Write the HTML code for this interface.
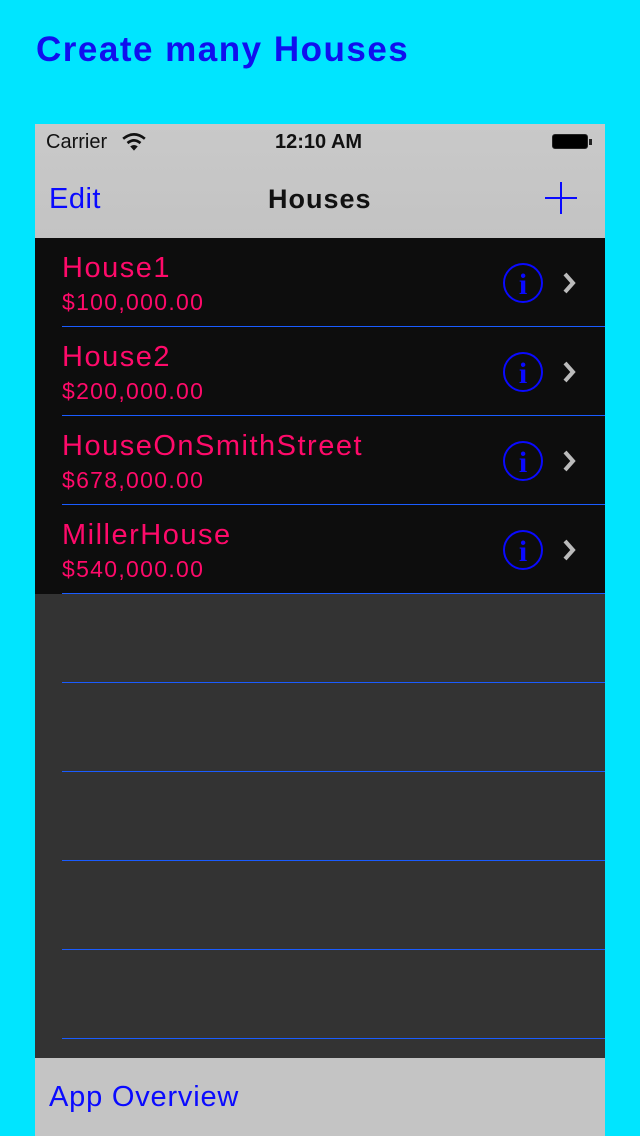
<!DOCTYPE html>
<html><head><style>
body{margin:0;width:640px;height:1136px;background:#00e5ff;position:relative;overflow:hidden;font-family:"Liberation Sans",sans-serif}
.a{position:absolute}
.title{left:36px;top:30px;font-size:35px;font-weight:bold;color:#1010ee;letter-spacing:1.5px}
.sep{position:absolute;left:62px;width:543px;height:1px;background:#1a5cff}
.n{position:absolute;left:62px;font-size:29px;color:#ff0a6a;letter-spacing:1.5px}
.p{position:absolute;left:62px;font-size:23px;color:#ff0a6a;letter-spacing:1.3px}
</style></head><body>
<div class="a title">Create many Houses</div>
<div class="a" style="left:35px;top:124px;width:570px;height:114px;background:linear-gradient(#c9c9c9,#c3c3c3)"></div>
<div class="a" style="left:46px;top:131px;font-size:20px;color:#111">Carrier</div>
<svg class="a" style="left:121px;top:132px" width="26" height="20" viewBox="0 0 24 18"><path d="M2 6 Q12 -2 22 6" stroke="#111" stroke-width="2.5" fill="none"/><path d="M6 10 Q12 5 18 10" stroke="#111" stroke-width="2.5" fill="none"/><path d="M12 17 L8.5 13 Q12 10.5 15.5 13Z" fill="#111"/></svg>
<div class="a" style="left:275px;top:131px;font-size:20px;font-weight:bold;color:#111">12:10 AM</div>
<div class="a" style="left:552px;top:134px;width:36px;height:15px;border:1px solid #222;border-radius:3px;background:#000;box-sizing:border-box"></div>
<div class="a" style="left:589px;top:139px;width:3px;height:6px;background:#222"></div>
<div class="a" style="left:49px;top:183px;font-size:29px;color:#0a0aff;letter-spacing:0.5px">Edit</div>
<div class="a" style="left:268px;top:184px;font-size:27px;font-weight:bold;color:#111;letter-spacing:1px">Houses</div>
<div class="a" style="left:560px;top:182px;width:2px;height:32px;background:#0a0aff"></div>
<div class="a" style="left:545px;top:197px;width:32px;height:2px;background:#0a0aff"></div>
<div class="a" style="left:35px;top:238px;width:570px;height:356px;background:#0d0d0d"></div>
<div class="a" style="left:35px;top:594px;width:570px;height:464px;background:#333"></div>
<div class="n" style="top:252px">House1</div><div class="p" style="top:289px">$100,000.00</div>
<div class="n" style="top:341px">House2</div><div class="p" style="top:378px">$200,000.00</div>
<div class="n" style="top:430px">HouseOnSmithStreet</div><div class="p" style="top:467px">$678,000.00</div>
<div class="n" style="top:519px">MillerHouse</div><div class="p" style="top:556px">$540,000.00</div>
<svg class="a" style="left:480px;top:238px" width="120" height="356">
<g id="r"><circle cx="43" cy="45" r="19" stroke="#0a0aff" stroke-width="2" fill="none"/><text x="43" y="56" text-anchor="middle" font-family="Liberation Serif" font-weight="bold" font-size="30" fill="#0a0aff">i</text><path d="M85 36 L93 45 L85 54" stroke="#bbb" stroke-width="4" fill="none"/></g>
<use href="#r" y="89"/><use href="#r" y="178"/><use href="#r" y="267"/>
</svg>
<div class="sep" style="top:326px"></div><div class="sep" style="top:415px"></div><div class="sep" style="top:504px"></div><div class="sep" style="top:593px"></div><div class="sep" style="top:682px"></div><div class="sep" style="top:771px"></div><div class="sep" style="top:860px"></div><div class="sep" style="top:949px"></div><div class="sep" style="top:1038px"></div>
<div class="a" style="left:35px;top:1058px;width:570px;height:78px;background:#c4c4c4"></div>
<div class="a" style="left:49px;top:1081px;font-size:29px;color:#0a0aff;letter-spacing:0.8px">App Overview</div>
</body></html>
